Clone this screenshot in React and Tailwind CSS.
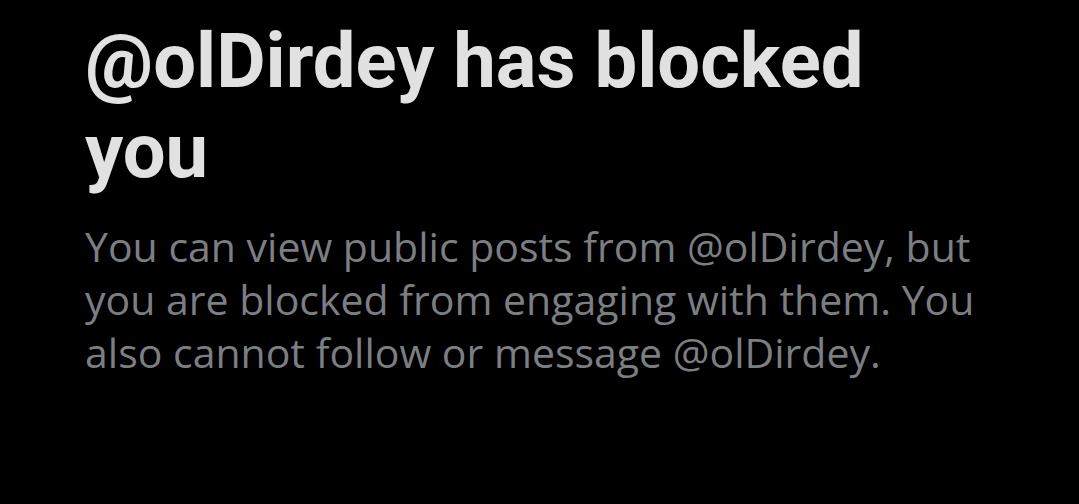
export default function App() {
  return (
    <div className="w-[1079px] h-[504px] bg-black overflow-hidden">
      <div className="pl-[85px] pt-[16px] w-[985px]">
        <h1 className="font-['Roboto',sans-serif] text-[76px] leading-[90px] font-bold text-[#e1e1e1]">
          @olDirdey has blocked you
        </h1>
        <p className="mt-[24px] font-['Open_Sans',sans-serif] text-[41px] leading-[53px] text-[#7b7e83]">
          You can view public posts from @olDirdey, but you are blocked from engaging with them. You also cannot follow or message @olDirdey.
        </p>
      </div>
    </div>
  );
}
